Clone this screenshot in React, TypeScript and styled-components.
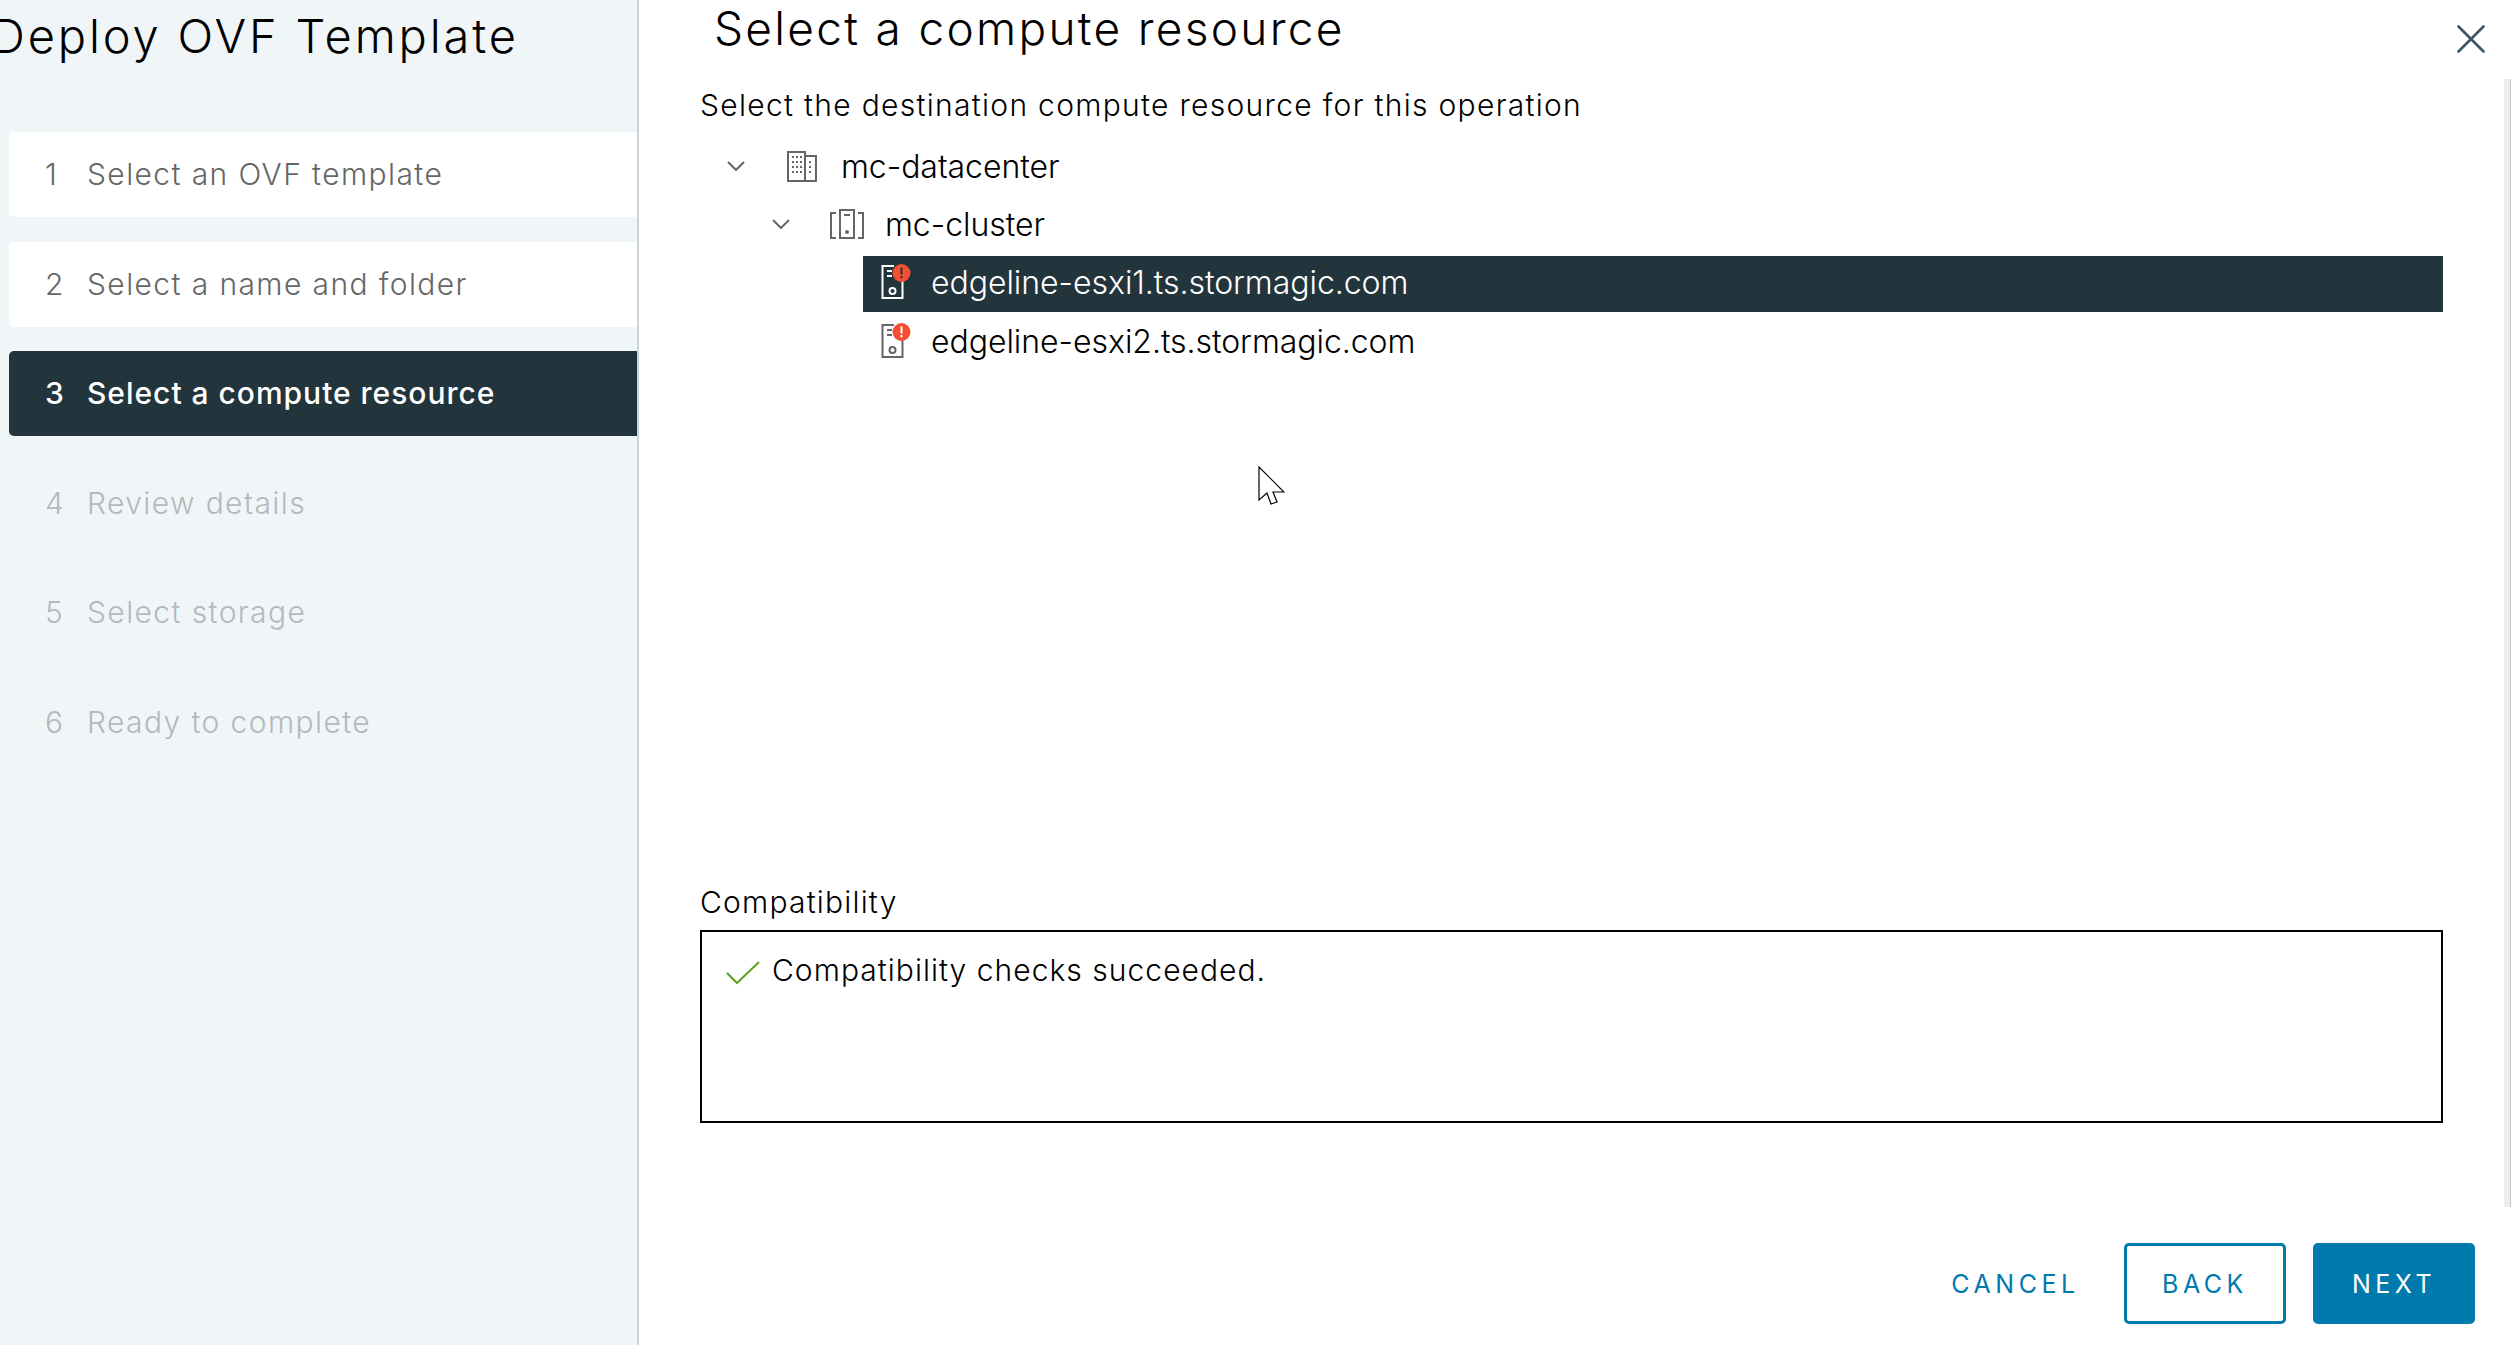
import React from "react";
import styled, { createGlobalStyle } from "styled-components";

const Global = createGlobalStyle`
  html, body { margin: 0; padding: 0; background: #fff; }
  body { font-family: Inter, "Open Sans", "Liberation Sans", sans-serif; }
  * { box-sizing: border-box; }
`;

const Page = styled.div`
  position: relative;
  display: flex;
  width: 2511px;
  height: 1345px;
  overflow: hidden;
  background: #fff;
`;

const Sidebar = styled.aside`
  flex: 0 0 639px;
  height: 100%;
  background: #f0f5f8;
  border-right: 2px solid #c9d6dd;
  padding-left: 9px;
  display: flex;
  flex-direction: column;
`;

const WizardTitle = styled.h1`
  margin: 0 0 0 -18px;
  height: 132px;
  padding-top: 8px;
  font-size: 47px;
  line-height: 55px;
  font-weight: 300;
  color: #000;
  white-space: nowrap;
  letter-spacing: 2.85px;
`;

const Steps = styled.ol`
  list-style: none;
  margin: 0;
  padding: 0;
  display: flex;
  flex-direction: column;
  gap: 24.5px;
`;

type StepState = "done" | "active" | "pending";

const colors: Record<StepState, string> = { done: "#666", active: "#fff", pending: "#b3b9bd" };

const Step = styled.li<{ $state: StepState }>`
  height: 85px;
  display: flex;
  align-items: center;
  padding-left: 36px;
  padding-bottom: 1px;
  border-radius: 5px 0 0 5px;
  background: ${(p) => (p.$state === "active" ? "#22343c" : p.$state === "done" ? "#fff" : "transparent")};
  color: ${(p) => colors[p.$state]};
  font-size: 30px;
  font-weight: ${(p) => (p.$state === "active" ? 500 : 300)};
  letter-spacing: ${(p) => (p.$state === "active" ? "0.98px" : "1.4px")};
  white-space: nowrap;
`;

const StepNumber = styled.span`
  flex: 0 0 42px;
  text-align: left;
`;

const Main = styled.main`
  flex: 1;
  display: flex;
  flex-direction: column;
  padding: 0 68px 21px 61px;
  min-width: 0;
`;

const PageTitle = styled.h2`
  margin: 0 0 0 14px;
  height: 58px;
  font-size: 46px;
  line-height: 56px;
  font-weight: 300;
  color: #000;
  white-space: nowrap;
  letter-spacing: 2.3px;
`;

const Description = styled.p`
  margin: 25px 0 0;
  height: 44px;
  line-height: 44px;
  font-size: 30px;
  font-weight: 300;
  letter-spacing: 1.3px;
  color: #000;
  white-space: nowrap;
`;

const Tree = styled.div`
  flex: 1;
  display: flex;
  flex-direction: column;
  margin-top: 10px;
`;

const TreeRow = styled.div<{ $indent: number; $selected?: boolean; $height: number; $lift?: number }>`
  display: flex;
  align-items: center;
  height: ${(p) => p.$height}px;
  margin-left: ${(p) => p.$indent}px;
  padding-bottom: ${(p) => p.$lift ?? 0}px;
  background: ${(p) => (p.$selected ? "#22343c" : "transparent")};
  color: ${(p) => (p.$selected ? "#fff" : "#000")};
  font-size: 32px;
  font-weight: 300;
  letter-spacing: -0.05px;
  white-space: nowrap;
`;

const RowGap = styled.div`
  height: 3px;
`;

const Chevron = styled.svg<{ $mr: number }>`
  width: 18px;
  height: 10px;
  margin-right: ${(p) => p.$mr}px;
  flex: none;
`;

const NodeIcon = styled.svg<{ $w: number; $h: number; $mr: number; $ml?: number }>`
  width: ${(p) => p.$w}px;
  height: ${(p) => p.$h}px;
  margin-right: ${(p) => p.$mr}px;
  margin-left: ${(p) => p.$ml ?? 0}px;
  flex: none;
`;

const CompatLabel = styled.div`
  height: 46px;
  line-height: 36px;
  font-size: 30px;
  font-weight: 300;
  letter-spacing: 1.2px;
  color: #000;
`;

const CompatBox = styled.div`
  height: 193px;
  border: 2px solid #000;
  padding: 20px 24px;
  display: flex;
  align-items: flex-start;
  gap: 12px;
  font-size: 30px;
  font-weight: 300;
  letter-spacing: 1.03px;
  line-height: 36px;
  color: #000;
`;

const Check = styled.svg`
  width: 34px;
  height: 24px;
  margin-top: 9px;
  flex: none;
`;

const Footer = styled.div`
  margin-top: 120px;
  margin-right: -32px;
  display: flex;
  justify-content: flex-end;
  gap: 27px;
`;

const Button = styled.button<{ $variant: "link" | "outline" | "solid" }>`
  height: 81px;
  width: ${(p) => (p.$variant === "link" ? "172px" : "162px")};
  border-radius: 5px;
  border: 3px solid ${(p) => (p.$variant === "link" ? "transparent" : "#0079ad")};
  background: ${(p) => (p.$variant === "solid" ? "#0079ad" : "transparent")};
  color: ${(p) => (p.$variant === "solid" ? "#fff" : "#0079ad")};
  font-family: inherit;
  font-size: 25px;
  font-weight: 400;
  letter-spacing: 4.5px;
  padding: 0 0 0 ${(p) => (p.$variant === "link" ? "9px" : "0")};
`;

const CloseIcon = styled.svg`
  position: absolute;
  top: 25px;
  left: 2457px;
  width: 28px;
  height: 28px;
`;

const ScrollTrack = styled.div`
  position: absolute;
  top: 79px;
  right: 0;
  width: 7px;
  height: 1128px;
  background: #eee;
  border-right: 1px solid #c4c4c4;
`;

const Pointer = styled.svg`
  position: absolute;
  left: 1258px;
  top: 466px;
  width: 27px;
  height: 40px;
`;

const steps: { label: string; state: StepState }[] = [
  { label: "Select an OVF template", state: "done" },
  { label: "Select a name and folder", state: "done" },
  { label: "Select a compute resource", state: "active" },
  { label: "Review details", state: "pending" },
  { label: "Select storage", state: "pending" },
  { label: "Ready to complete", state: "pending" },
];

const ChevronIcon = ({ gap }: { gap: number }) => (
  <Chevron $mr={gap} viewBox="0 0 18 10">
    <path d="M1 1l8 8 8-8" fill="none" stroke="#666" strokeWidth="2" />
  </Chevron>
);

const HostIcon = ({ stroke }: { stroke: string }) => (
  <NodeIcon $w={30} $h={36} $mr={20} viewBox="0 0 30 36" $ml={18}>
    <path d="M13 2H1.500v32h20V16" fill="none" stroke={stroke} strokeWidth="2" />
    <path d="M6 7h5M6 12h5" stroke={stroke} strokeWidth="2" />
    <circle cx="11.500" cy="27" r="3" fill="none" stroke={stroke} strokeWidth="2" />
    <circle cx="20.500" cy="9" r="9" fill="#f54f31" />
    <rect x="19.500" y="3.500" width="2" height="7" fill={stroke === "#fff" ? "#22343c" : "#fff"} />
    <rect x="19.500" y="12" width="2" height="2.200" fill={stroke === "#fff" ? "#22343c" : "#fff"} />
  </NodeIcon>
);

export default function App() {
  return (
    <Page>
      <Global />
      <Sidebar>
        <WizardTitle>Deploy OVF Template</WizardTitle>
        <Steps>
          {steps.map((s, i) => (
            <Step key={s.label} $state={s.state}>
              <StepNumber>{i + 1}</StepNumber>
              {s.label}
            </Step>
          ))}
        </Steps>
      </Sidebar>
      <Main>
        <PageTitle>Select a compute resource</PageTitle>
        <Description>Select the destination compute resource for this operation</Description>
        <Tree>
          <TreeRow $indent={27} $height={58}>
            <ChevronIcon gap={42} />
            <NodeIcon $w={30} $h={32} $mr={24} viewBox="0 0 30 32">
              <g fill="none" stroke="#666" strokeWidth="2">
                <path d="M1 31V2h17v29zM18 6h11v25H1" />
              </g>
              <path
                d="M5 6h2v2H5zM9 6h2v2H9zM13 6h2v2h-2zM5 11h2v2H5zM9 11h2v2H9zM13 11h2v2h-2zM5 16h2v2H5zM9 16h2v2H9zM13 16h2v2h-2zM5 21h2v2H5zM9 21h2v2H9zM13 21h2v2h-2zM22 11h2v2h-2zM22 16h2v2h-2zM22 21h2v2h-2z"
                fill="#666"
              />
            </NodeIcon>
            mc-datacenter
          </TreeRow>
          <TreeRow $indent={72} $height={58}>
            <ChevronIcon gap={40} />
            <NodeIcon $w={34} $h={30} $mr={21} viewBox="0 0 34 30">
              <g fill="none" stroke="#666" strokeWidth="2">
                <path d="M6 4H1v25h5M28 4h5v25h-5" />
                <path d="M10 1h14v28H10zM14 6h6" />
              </g>
              <circle cx="17" cy="23" r="2" fill="#666" />
            </NodeIcon>
            mc-cluster
          </TreeRow>
          <RowGap />
          <TreeRow $indent={163} $height={56} $selected $lift={4}>
            <HostIcon stroke="#fff" />
            edgeline-esxi1.ts.stormagic.com
          </TreeRow>
          <RowGap />
          <TreeRow $indent={163} $height={56} $lift={4}>
            <HostIcon stroke="#666" />
            edgeline-esxi2.ts.stormagic.com
          </TreeRow>
        </Tree>
        <CompatLabel>Compatibility</CompatLabel>
        <CompatBox>
          <Check viewBox="0 0 34 24">
            <path d="M1 12l10 10L33 1" fill="none" stroke="#5aa220" strokeWidth="2" />
          </Check>
          Compatibility checks succeeded.
        </CompatBox>
        <Footer>
          <Button $variant="link">CANCEL</Button>
          <Button $variant="outline">BACK</Button>
          <Button $variant="solid">NEXT</Button>
        </Footer>
      </Main>
      <CloseIcon viewBox="0 0 28 28">
        <path d="M1.500 1.500l25 25M26.500 1.500l-25 25" stroke="#3c5563" strokeWidth="2.600" strokeLinecap="round" />
      </CloseIcon>
      <ScrollTrack />
      <Pointer viewBox="0 0 27 40">
        <path d="M1 1v33l8-7 4 11 6-2-4-10h11z" fill="#fff" stroke="#000" strokeWidth="1.200" strokeLinejoin="miter" />
      </Pointer>
    </Page>
  );
}
